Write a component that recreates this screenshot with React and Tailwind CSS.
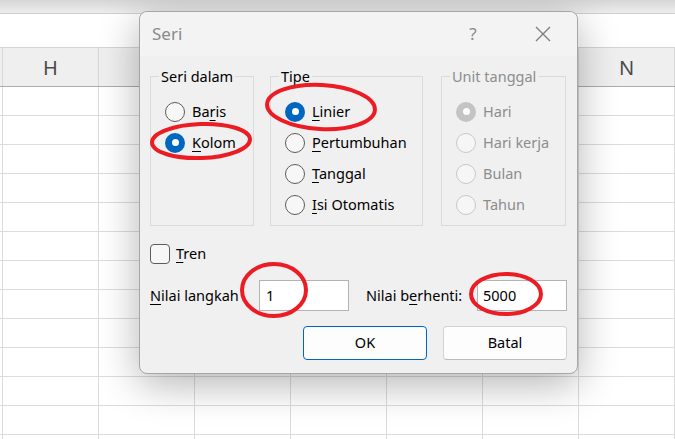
import React from "react";

const cols = ["H", "I", "J", "K", "L", "M", "N"];
// only H and N peek out from behind the dialog
const shown = { H: true, N: true };
const rows = Array.from({ length: 13 });

const Radio = ({ checked, disabled }) => {
  if (checked) {
    return (
      <span
        className={`flex items-center justify-center w-[20px] h-[20px] rounded-full shrink-0 ${
          disabled ? "bg-[#c4c4c4]" : "bg-[#0067c0]"
        }`}
      >
        <span className="w-[7px] h-[7px] rounded-full bg-white" />
      </span>
    );
  }
  return (
    <span
      className={`w-[20px] h-[20px] rounded-full border shrink-0 ${
        disabled ? "border-[#c8c8c8] bg-[#f6f6f6]" : "border-[#5c5c5c] bg-[#f7f7f7]"
      }`}
    />
  );
};

// label with an underlined access key
const Key = ({ pre = "", k, post = "" }) => (
  <span>
    {pre}
    <span className="underline underline-offset-[3px] decoration-1">{k}</span>
    {post}
  </span>
);

const Option = ({ checked, disabled, children }) => (
  <div className="flex items-center h-[31px] gap-[7px]">
    <Radio checked={checked} disabled={disabled} />
    <span className={disabled ? "text-[#8d8d8d]" : "text-black"}>{children}</span>
  </div>
);

const Group = ({ title, disabled, className, children }) => (
  <div className={`relative h-[150px] border border-[#dadada] pt-[19px] pl-[14px] ${className}`}>
    <span
      className={`absolute -top-[11px] left-[8px] bg-[#f0f0f0] px-[2px] leading-[20px] ${
        disabled ? "text-[#8d8d8d]" : "text-black"
      }`}
    >
      {title}
    </span>
    {children}
  </div>
);

export default function App() {
  return (
    <div className="relative w-[675px] h-[439px] overflow-hidden bg-white font-['Noto_Sans',sans-serif]">
      {/* Spreadsheet behind */}
      <div className="h-[14px] bg-gradient-to-b from-[#d6d6d6] to-[#ededed] border-b border-[#cfcfcf]" />
      <div className="h-[34px] bg-white border-b border-[#d4d4d4]" />
      <div className="flex h-[39px] bg-[#efefef] border-b border-[#ababab]">
        <div className="w-[2px]" />
        {cols.map((c) => (
          <div
            key={c}
            className="w-[96px] shrink-0 border-l border-[#d8d8d8] flex items-center justify-center text-[20px] text-[#4a4a4a] pt-[1px]"
          >
            {shown[c] ? c : null}
          </div>
        ))}
        <div className="flex-1 border-l border-[#d8d8d8]" />
      </div>
      {rows.map((_, i) => (
        <div key={i} className="flex h-[29px] border-b border-[#dcdcdc]">
          <div className="w-[2px]" />
          {cols.map((c) => (
            <div key={c} className="w-[96px] shrink-0 border-l border-[#dcdcdc]" />
          ))}
          <div className="flex-1 border-l border-[#dcdcdc]" />
        </div>
      ))}

      {/* Dialog */}
      <div className="absolute left-[139px] top-[11px] w-[439px] h-[363px] rounded-[8px] border border-[#a6a6a6] bg-[#f0f0f0] shadow-[0_10px_40px_rgba(0,0,0,0.3)] flex flex-col text-[14.5px] text-black">
        <div className="h-[44px] flex items-center rounded-t-[8px] bg-[#f3f3f3] pl-[12px]">
          <span className="text-[17px] text-[#8a8a8a]">Seri</span>
          <span className="ml-auto w-[20px] text-center text-[17px] text-[#8a8a8a] mr-[52px]">?</span>
          <svg width="16" height="16" viewBox="0 0 16 16" className="mr-[26px]">
            <path d="M1 1L15 15M15 1L1 15" stroke="#7c7c7c" strokeWidth="1.3" />
          </svg>
        </div>

        <div className="flex flex-col px-[10px] pt-[20px]">
          <div className="flex">
            <Group title="Seri dalam" className="w-[104px]">
              <Option>
                <Key pre="Ba" k="r" post="is" />
              </Option>
              <Option checked>
                <Key k="K" post="olom" />
              </Option>
            </Group>
            <Group title="Tipe" className="w-[153px] ml-[16px]">
              <Option checked>
                <Key k="L" post="inier" />
              </Option>
              <Option>
                <Key k="P" post="ertumbuhan" />
              </Option>
              <Option>
                <Key k="T" post="anggal" />
              </Option>
              <Option>
                <Key k="I" post="si Otomatis" />
              </Option>
            </Group>
            <Group title="Unit tanggal" disabled className="w-[125px] ml-[18px]">
              <Option checked disabled>Hari</Option>
              <Option disabled>Hari kerja</Option>
              <Option disabled>Bulan</Option>
              <Option disabled>Tahun</Option>
            </Group>
          </div>

          <div className="flex items-center h-[20px] mt-[18px] gap-[6px]">
            <span className="w-[20px] h-[20px] rounded-[4px] border border-[#5c5c5c] bg-[#f7f7f7]" />
            <Key k="T" post="ren" />
          </div>

          <div className="flex items-center h-[31px] mt-[16px]">
            <span className="w-[109px] shrink-0">
              <Key k="N" post="ilai langkah" />
            </span>
            <div className="w-[90px] h-[31px] bg-white border border-[#b4b4b4] flex items-center pl-[6px]">1</div>
            <span className="w-[111px] ml-[17px] shrink-0">
              <Key pre="Nilai b" k="e" post="rhenti:" />
            </span>
            <div className="w-[90px] h-[31px] bg-white border border-[#b4b4b4] flex items-center pl-[5px]">5000</div>
          </div>

          <div className="flex justify-end gap-[16px] mt-[15px]">
            <button className="w-[124px] h-[34px] rounded-[4px] border border-[#0067c0] bg-[#fdfdfd] text-black">OK</button>
            <button className="w-[124px] h-[34px] rounded-[4px] border border-[#d2d2d2] border-b-[#bcbcbc] bg-[#fdfdfd] text-black">
              Batal
            </button>
          </div>
        </div>
      </div>

      {/* Red hand-drawn marks */}
      <svg className="absolute left-0 top-0 pointer-events-none" width="675" height="439">
        <g fill="none" stroke="#ec1c24" strokeWidth="4">
          <ellipse cx="201" cy="141" rx="49" ry="17" transform="rotate(-2 201 141)" />
          <ellipse cx="321" cy="107" rx="54" ry="22" transform="rotate(3 321 107)" />
          <ellipse cx="274" cy="290" rx="32" ry="26" />
          <ellipse cx="506" cy="294" rx="35" ry="20" />
        </g>
      </svg>
    </div>
  );
}
